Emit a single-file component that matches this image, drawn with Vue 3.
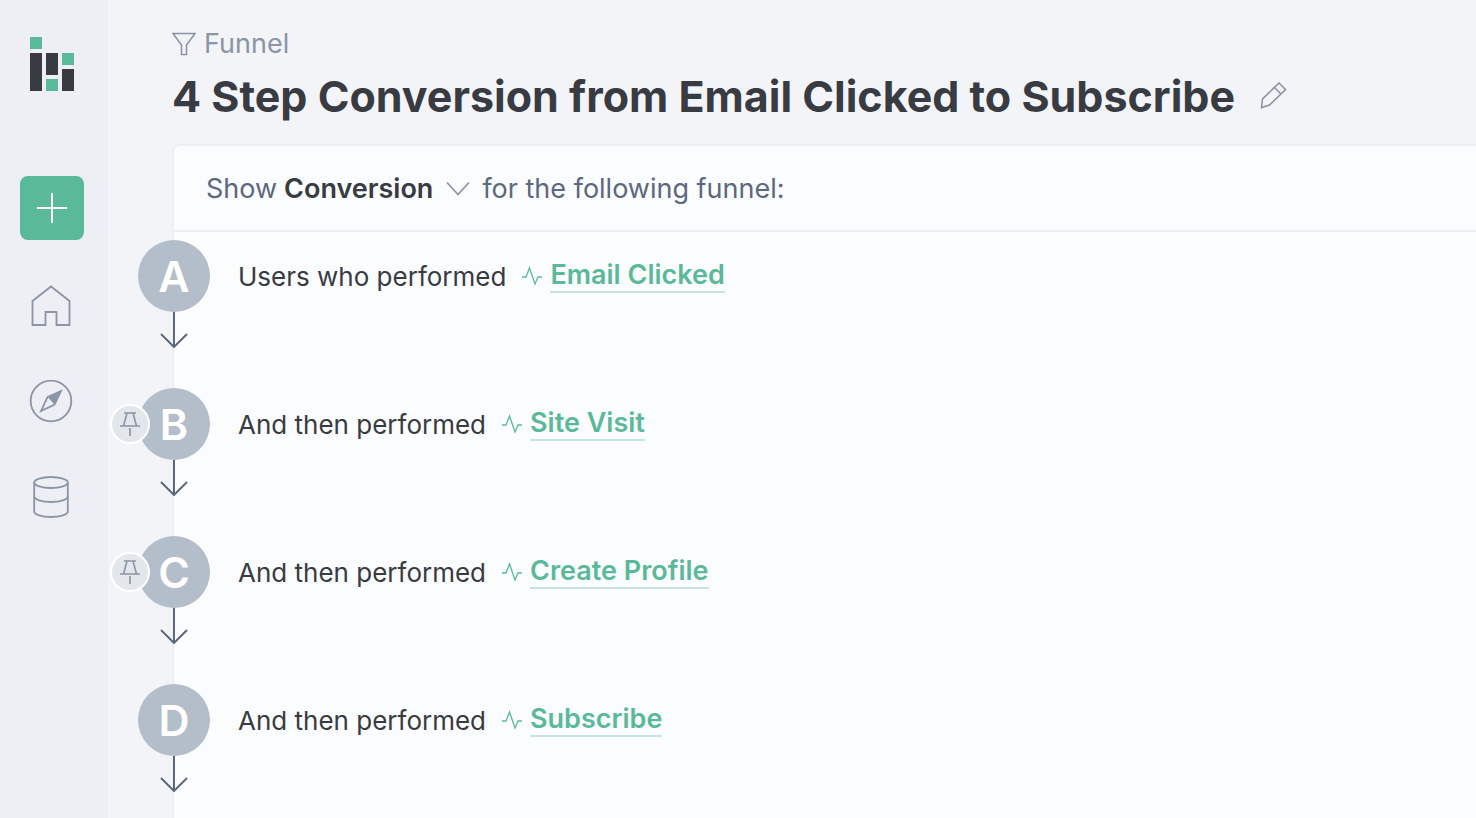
<template>
  <div class="app">
    <nav class="sidebar" aria-label="Main">
      <a class="logo" href="#" aria-label="Dashboard">
        <svg width="44" height="54" viewBox="0 0 44 54">
          <g fill="#5ab999">
            <rect x="0" y="0" width="12" height="12" />
            <rect x="32" y="16" width="12" height="12" />
            <rect x="16" y="42" width="12" height="12" />
          </g>
          <g fill="#393b42">
            <rect x="0" y="16" width="12" height="38" />
            <rect x="16" y="16" width="12" height="22" />
            <rect x="32" y="32" width="12" height="22" />
          </g>
        </svg>
      </a>
      <button class="create" type="button" aria-label="New report">
        <svg width="32" height="32" viewBox="0 0 32 32">
          <path d="M16 1v30M1 16h30" stroke="#fff" stroke-width="2" />
        </svg>
      </button>
      <a class="nav-link" href="#" aria-label="Home">
        <svg class="icon" width="44" height="44" viewBox="0 0 44 44">
          <path d="M3.500 17L22 2.500L40.500 17V41H27.500V28H16.500V41H3.500Z" />
        </svg>
      </a>
      <a class="nav-link" href="#" aria-label="Explore">
        <svg class="icon" width="44" height="44" viewBox="0 0 44 44">
          <circle cx="22" cy="21" r="20.300" />
          <path d="M18.500 17L32 11L25.500 24.500L12 31Z" />
          <path class="solid" d="M18.500 17L32.500 10.500L25.500 24.500Z" />
        </svg>
      </a>
      <a class="nav-link" href="#" aria-label="Data">
        <svg class="icon" width="44" height="44" viewBox="0 0 44 44">
          <ellipse cx="22" cy="6.500" rx="16.800" ry="5.500" />
          <path d="M5.200 6.500V35.500C5.200 38.500 12.700 41 22 41S38.800 38.500 38.800 35.500V6.500" />
          <path d="M5.200 20.500C5.200 23.500 12.700 26 22 26S38.800 23.500 38.800 20.500" />
        </svg>
      </a>
    </nav>

    <main class="main">
      <header class="header">
        <div class="kind">
          <svg class="icon thin" width="24" height="24" viewBox="0 0 24 24">
            <path d="M1 1.500H23L14.500 13V22.500H9.500V13Z" />
          </svg>
          <span>Funnel</span>
        </div>
        <div class="title-row">
          <h1>4 Step Conversion from Email Clicked to Subscribe</h1>
          <button class="edit" type="button" aria-label="Rename">
            <svg class="icon thin" width="28" height="28" viewBox="0 0 28 28">
              <path d="M20 1L26.500 7.500L10.500 23L2.500 25.500L3.500 17ZM15.500 5.500L22 12" />
            </svg>
          </button>
        </div>
      </header>

      <section class="panel">
        <div class="toolbar">
          <label for="metric">Show</label>
          <div class="picker">
            <select id="metric" v-model="metric">
              <option v-for="m in metrics" :key="m">{{ m }}</option>
            </select>
            <svg class="chevron icon" width="24" height="16" viewBox="0 0 24 16">
              <path d="M1 1.500L12 13.500L23 1.500" />
            </svg>
          </div>
          <span>for the following funnel:</span>
        </div>

        <ol class="steps">
          <li v-for="step in steps" :key="step.letter" class="step">
            <div class="marker">
              <div class="badge">{{ step.letter }}</div>
              <svg class="arrow" width="28" height="36" viewBox="0 0 28 36">
                <path d="M14 0V35M1 22L14 35L27 22" />
              </svg>
              <button v-if="step.pinned" class="pin" type="button" aria-label="Pin step">
                <svg class="icon thin" width="20" height="24" viewBox="0 0 20 24">
                  <path d="M4 1H16M7 1L3.500 14M13 1L16.500 14M0 14H20M10 16V24" />
                </svg>
              </button>
            </div>
            <div class="sentence">
              <span class="verb">{{ step.text }}</span>
              <svg class="pulse" width="20" height="20" viewBox="0 0 20 20">
                <path d="M0 11H4L7.500 2L13 18L16 11H20" />
              </svg>
              <a class="event" href="#">{{ step.event }}</a>
            </div>
          </li>
        </ol>
      </section>
    </main>
  </div>
</template>

<script setup>
import { ref } from 'vue'

const metrics = ['Conversion', 'Time to convert']
const metric = ref('Conversion')

const steps = [
  { letter: 'A', text: 'Users who performed', event: 'Email Clicked', pinned: false },
  { letter: 'B', text: 'And then performed', event: 'Site Visit', pinned: true },
  { letter: 'C', text: 'And then performed', event: 'Create Profile', pinned: true },
  { letter: 'D', text: 'And then performed', event: 'Subscribe', pinned: false }
]
</script>

<style>
body {
  margin: 0;
  background: #f3f4f8;
}
</style>

<style scoped>
.app {
  display: flex;
  min-height: 100vh;
  font-family: Inter, 'Liberation Sans', sans-serif;
  font-size: 27px;
  line-height: 36px;
  color: #393b42;
}

button {
  padding: 0;
  border: none;
  background: none;
  cursor: pointer;
}

svg {
  display: block;
  flex: none;
}

.icon {
  fill: none;
  stroke: #8b95a5;
  stroke-width: 1.8;
}

.thin {
  stroke-width: 1.6;
}

.solid {
  fill: #8b95a5;
  stroke: none;
}

.sidebar {
  display: flex;
  flex-direction: column;
  align-items: center;
  flex: none;
  width: 108px;
  padding-top: 37px;
  box-sizing: border-box;
  background: #edeff4;
}

.logo {
  margin: 0 4px 85px 0;
}

.create {
  display: flex;
  align-items: center;
  justify-content: center;
  width: 64px;
  height: 64px;
  margin: 0 4px 44px 0;
  border-radius: 8px;
  background: #5ab999;
}

.nav-link {
  margin: 0 6px 52px 0;
}

.main {
  display: flex;
  flex-direction: column;
  flex: 1;
  min-width: 0;
  padding-left: 64px;
}

.header {
  padding: 26px 0 20px;
}

.kind {
  display: flex;
  align-items: center;
  gap: 8px;
  color: #8b95a5;
}

.title-row {
  display: flex;
  align-items: center;
  gap: 24px;
  padding-top: 6px;
}

h1 {
  margin: 0;
  font-size: 43px;
  line-height: 56px;
  font-weight: 700;
  white-space: nowrap;
}

.panel {
  flex: 1;
  border: 2px solid #edeff3;
  border-width: 2px 0 0 2px;
  border-radius: 8px 0 0 0;
  background: #fbfcfe;
}

.toolbar {
  display: flex;
  align-items: center;
  gap: 7px;
  padding: 25px 32px 23px;
  border-bottom: 2px solid #edeff3;
  color: #5c687d;
}

.picker {
  position: relative;
}

.picker select {
  display: block;
  appearance: none;
  field-sizing: content;
  margin: 0;
  padding: 0 42px 0 0;
  border: none;
  background: none;
  color: #393b42;
  font: inherit;
  font-weight: 600;
  cursor: pointer;
}

.chevron {
  position: absolute;
  right: 5px;
  top: 10px;
  pointer-events: none;
}

.steps {
  display: flex;
  flex-direction: column;
  gap: 40px;
  margin: 0;
  padding: 8px 0 0;
  list-style: none;
}

.step {
  display: flex;
  gap: 28px;
}

.marker {
  position: relative;
  display: flex;
  flex-direction: column;
  align-items: center;
  width: 72px;
  margin-left: -36px;
}

.badge {
  width: 72px;
  height: 72px;
  border-radius: 50%;
  background: #b4bdca;
  color: #fff;
  font-size: 43px;
  line-height: 72px;
  font-weight: 600;
  text-align: center;
}

.arrow {
  fill: none;
  stroke: #5c687d;
  stroke-width: 2;
}

.pin {
  position: absolute;
  left: -28px;
  top: 16px;
  display: flex;
  align-items: center;
  justify-content: center;
  width: 40px;
  height: 40px;
  border: 2px solid #fff;
  border-radius: 50%;
  background: #e3e6eb;
}

.sentence {
  display: flex;
  align-items: center;
  height: 72px;
}

.verb {
  padding-top: 2px;
  font-size: 26px;
}

.pulse {
  margin: 0 8px 0 16px;
  fill: none;
  stroke: #5ab999;
  stroke-width: 1.3;
}

.event {
  border-bottom: 2px solid #c5e6dc;
  line-height: 32px;
  color: #5ab999;
  font-weight: 600;
  text-decoration: none;
}
</style>
